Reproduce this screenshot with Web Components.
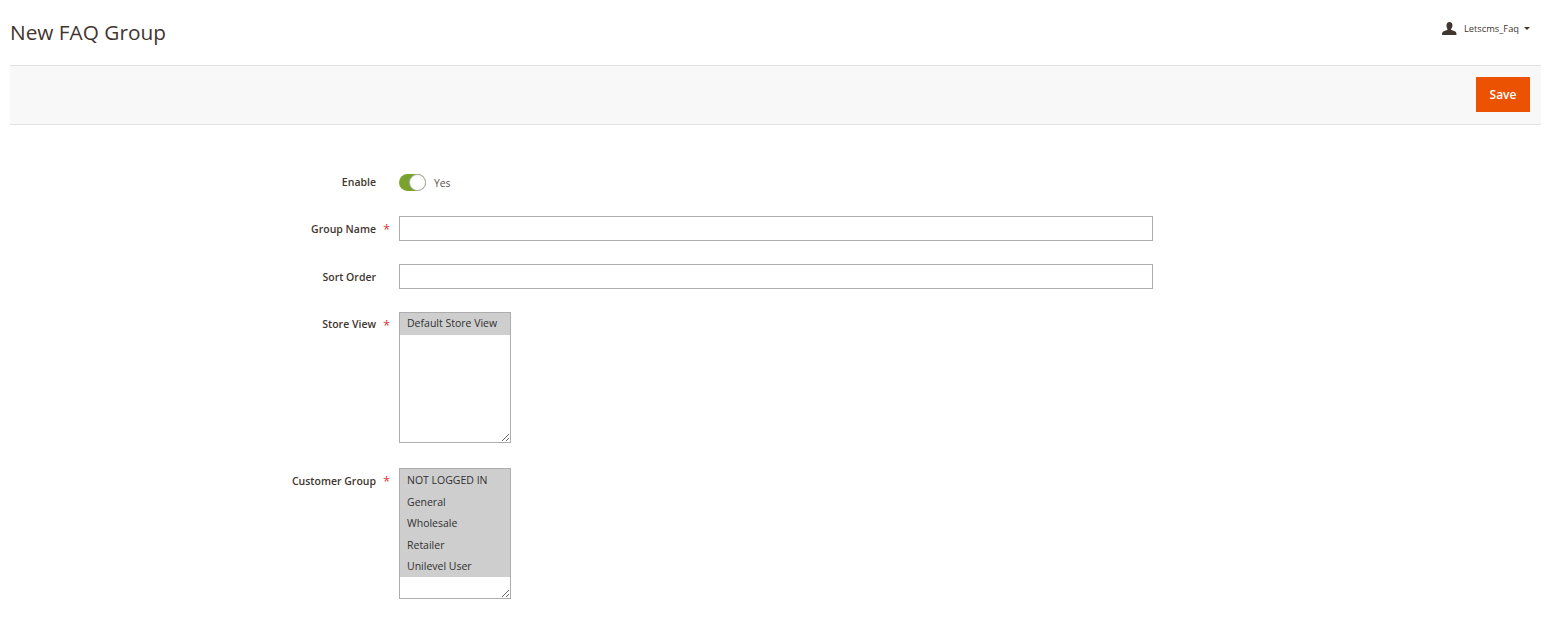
<!DOCTYPE html>
<html lang="en">
<head>
<meta charset="utf-8">
<title>New FAQ Group</title>
<style>
    html, body { margin: 0; padding: 0; background: #fff; }
    body { font-family: "Open Sans", sans-serif; color: #41362f; }
</style>
</head>
<body>
<admin-page>
    <page-header slot="header" titulo="New FAQ Group" user="Letscms_Faq"></page-header>
    <action-bar slot="actions" btn-text="Save"></action-bar>
    <form-row label="Enable" style="--label-top: 2px"><toggle-switch text="Yes"></toggle-switch></form-row>
    <form-row label="Group Name" required><text-field></text-field></form-row>
    <form-row label="Sort Order"><text-field></text-field></form-row>
    <form-row label="Store View" required style="--label-top: 4px">
        <multi-select>
            <multi-option>Default Store View</multi-option>
        </multi-select>
    </form-row>
    <form-row label="Customer Group" required>
        <multi-select style="--option-top: 1px">
            <multi-option>NOT LOGGED IN</multi-option>
            <multi-option>General</multi-option>
            <multi-option>Wholesale</multi-option>
            <multi-option>Retailer</multi-option>
            <multi-option>Unilevel User</multi-option>
        </multi-select>
    </form-row>
</admin-page>

<script>
class AdminPage extends HTMLElement {
    constructor () {
        super();
        this.attachShadow({ mode: 'open' });
        this.shadowRoot.innerHTML = /* html */`
            <style>
                :host { display: block; padding: 0 23px 0 10px; }
                .form { display: flex; flex-direction: column; gap: 23px; padding-top: 47px; }
            </style>
            <slot name="header"></slot>
            <slot name="actions"></slot>
            <div class="form"><slot></slot></div>
        `;
    }
}

class PageHeader extends HTMLElement {
    constructor () {
        super();
        this.attachShadow({ mode: 'open' });
        this.shadowRoot.innerHTML = /* html */`
            <style>
                :host { display: flex; justify-content: space-between; height: 65px; font-family: "Open Sans", sans-serif; }
                h1 { margin: 18px 0 0; font-size: 20.8px; line-height: 28px; font-weight: 400; color: #41362f; }
                .user { display: flex; align-items: center; gap: 7px; height: 14px; margin: 21px 11px 0 0; font-size: 9.3px; color: #41362f; }
                .user svg { display: block; }
                .caret { width: 0; height: 0; margin-left: -2px; border: 3px solid transparent; border-top: 3px solid #41362f; border-bottom: 0; }
            </style>
            <h1></h1>
            <div class="user">
                <svg width="15" height="13" viewBox="0 0 15 13"><path fill="#41362f" d="M7.500 0c1.900 0 3 1.300 3 3.200 0 1.500-.7 2.900-1.400 3.600-.3.400-.2.900.3 1.200 1.700.8 4 1.200 4.600 2.300.4.700.5 1.700.5 2.700H0c0-1 .1-2 .5-2.700.6-1.100 2.900-1.500 4.600-2.300.5-.3.600-.8.300-1.200C4.700 6.100 4.500 4.700 4.500 3.200 4.500 1.300 5.600 0 7.500 0z"/></svg>
                <span class="name"></span>
                <span class="caret"></span>
            </div>
        `;
        this.shadowRoot.querySelector('h1').textContent = this.getAttribute('titulo');
        this.shadowRoot.querySelector('.name').textContent = this.getAttribute('user');
    }
}

class ActionBar extends HTMLElement {
    constructor () {
        super();
        this.attachShadow({ mode: 'open' });
        this.shadowRoot.innerHTML = /* html */`
            <style>
                :host { display: flex; justify-content: flex-end; align-items: flex-start; box-sizing: border-box; height: 60px; padding: 11px 11px 0 0; background: #f8f8f8; border-top: 1px solid #e3e3e3; border-bottom: 1px solid #e3e3e3; font-family: "Open Sans", sans-serif; }
                button { width: 54px; height: 35px; padding: 0; border: 0; background: #eb5202; color: #fff; font: 600 12px "Open Sans", sans-serif; }
            </style>
            <button type="button"></button>
        `;
        this.shadowRoot.querySelector('button').textContent = this.getAttribute('btn-text');
    }
}

class FormRow extends HTMLElement {
    constructor () {
        super();
        this.attachShadow({ mode: 'open' });
        this.shadowRoot.innerHTML = /* html */`
            <style>
                :host { display: grid; grid-template-columns: 366px 23px 1fr; font-family: "Open Sans", sans-serif; }
                .label { padding-top: var(--label-top, 5px); text-align: right; font-size: 10.5px; line-height: 16px; font-weight: 600; color: #41362f; }
                .star { padding: 5px 0 0 7px; font-size: 13px; line-height: 16px; color: #d83a3a; }
            </style>
            <div class="label"></div>
            <div class="star"></div>
            <div class="control"><slot></slot></div>
        `;
        this.shadowRoot.querySelector('.label').textContent = this.getAttribute('label');
        this.shadowRoot.querySelector('.star').textContent = this.hasAttribute('required') ? '*' : '';
    }
}

class ToggleSwitch extends HTMLElement {
    constructor () {
        super();
        this.attachShadow({ mode: 'open' });
        this.shadowRoot.innerHTML = /* html */`
            <style>
                :host { display: flex; align-items: center; gap: 8px; height: 21px; font: 10.3px "Open Sans", sans-serif; color: #5a5048; }
                .track { display: flex; justify-content: flex-end; box-sizing: border-box; width: 27px; height: 17px; border-radius: 9px; background: #79a22e; }
                .knob { box-sizing: border-box; width: 17px; height: 17px; border: 1px solid #adadad; border-radius: 50%; background: #fff; }
            </style>
            <div class="track"><div class="knob"></div></div>
            <span></span>
        `;
        this.shadowRoot.querySelector('span').textContent = this.getAttribute('text');
    }
}

class TextField extends HTMLElement {
    constructor () {
        super();
        this.attachShadow({ mode: 'open' });
        this.shadowRoot.innerHTML = /* html */`
            <style>
                :host { display: block; }
                input { display: block; box-sizing: border-box; width: 754px; height: 25px; margin: 0; padding: 0 8px; border: 1px solid #adadad; border-radius: 0; background: #fff; outline: 0; font: 11px "Open Sans", sans-serif; }
            </style>
            <input type="text">
        `;
    }
}

class MultiSelect extends HTMLElement {
    constructor () {
        super();
        this.attachShadow({ mode: 'open' });
        this.shadowRoot.innerHTML = /* html */`
            <style>
                :host { display: block; box-sizing: border-box; width: 112px; height: 131px; margin-bottom: 2px; border: 1px solid #adadad; background: #fff; overflow: auto; resize: both; }
            </style>
            <slot></slot>
        `;
    }
}

class MultiOption extends HTMLElement {
    constructor () {
        super();
        this.attachShadow({ mode: 'open' });
        this.shadowRoot.innerHTML = /* html */`
            <style>
                :host { display: block; box-sizing: border-box; height: 21.6px; padding: var(--option-top, 0) 7px 0; background: #cecece; font: 10.5px/21.6px "Open Sans", sans-serif; color: #303030; white-space: nowrap; overflow: hidden; }
            </style>
            <slot></slot>
        `;
    }
}

customElements.define('admin-page', AdminPage);
customElements.define('page-header', PageHeader);
customElements.define('action-bar', ActionBar);
customElements.define('form-row', FormRow);
customElements.define('toggle-switch', ToggleSwitch);
customElements.define('text-field', TextField);
customElements.define('multi-select', MultiSelect);
customElements.define('multi-option', MultiOption);
</script>
</body>
</html>
